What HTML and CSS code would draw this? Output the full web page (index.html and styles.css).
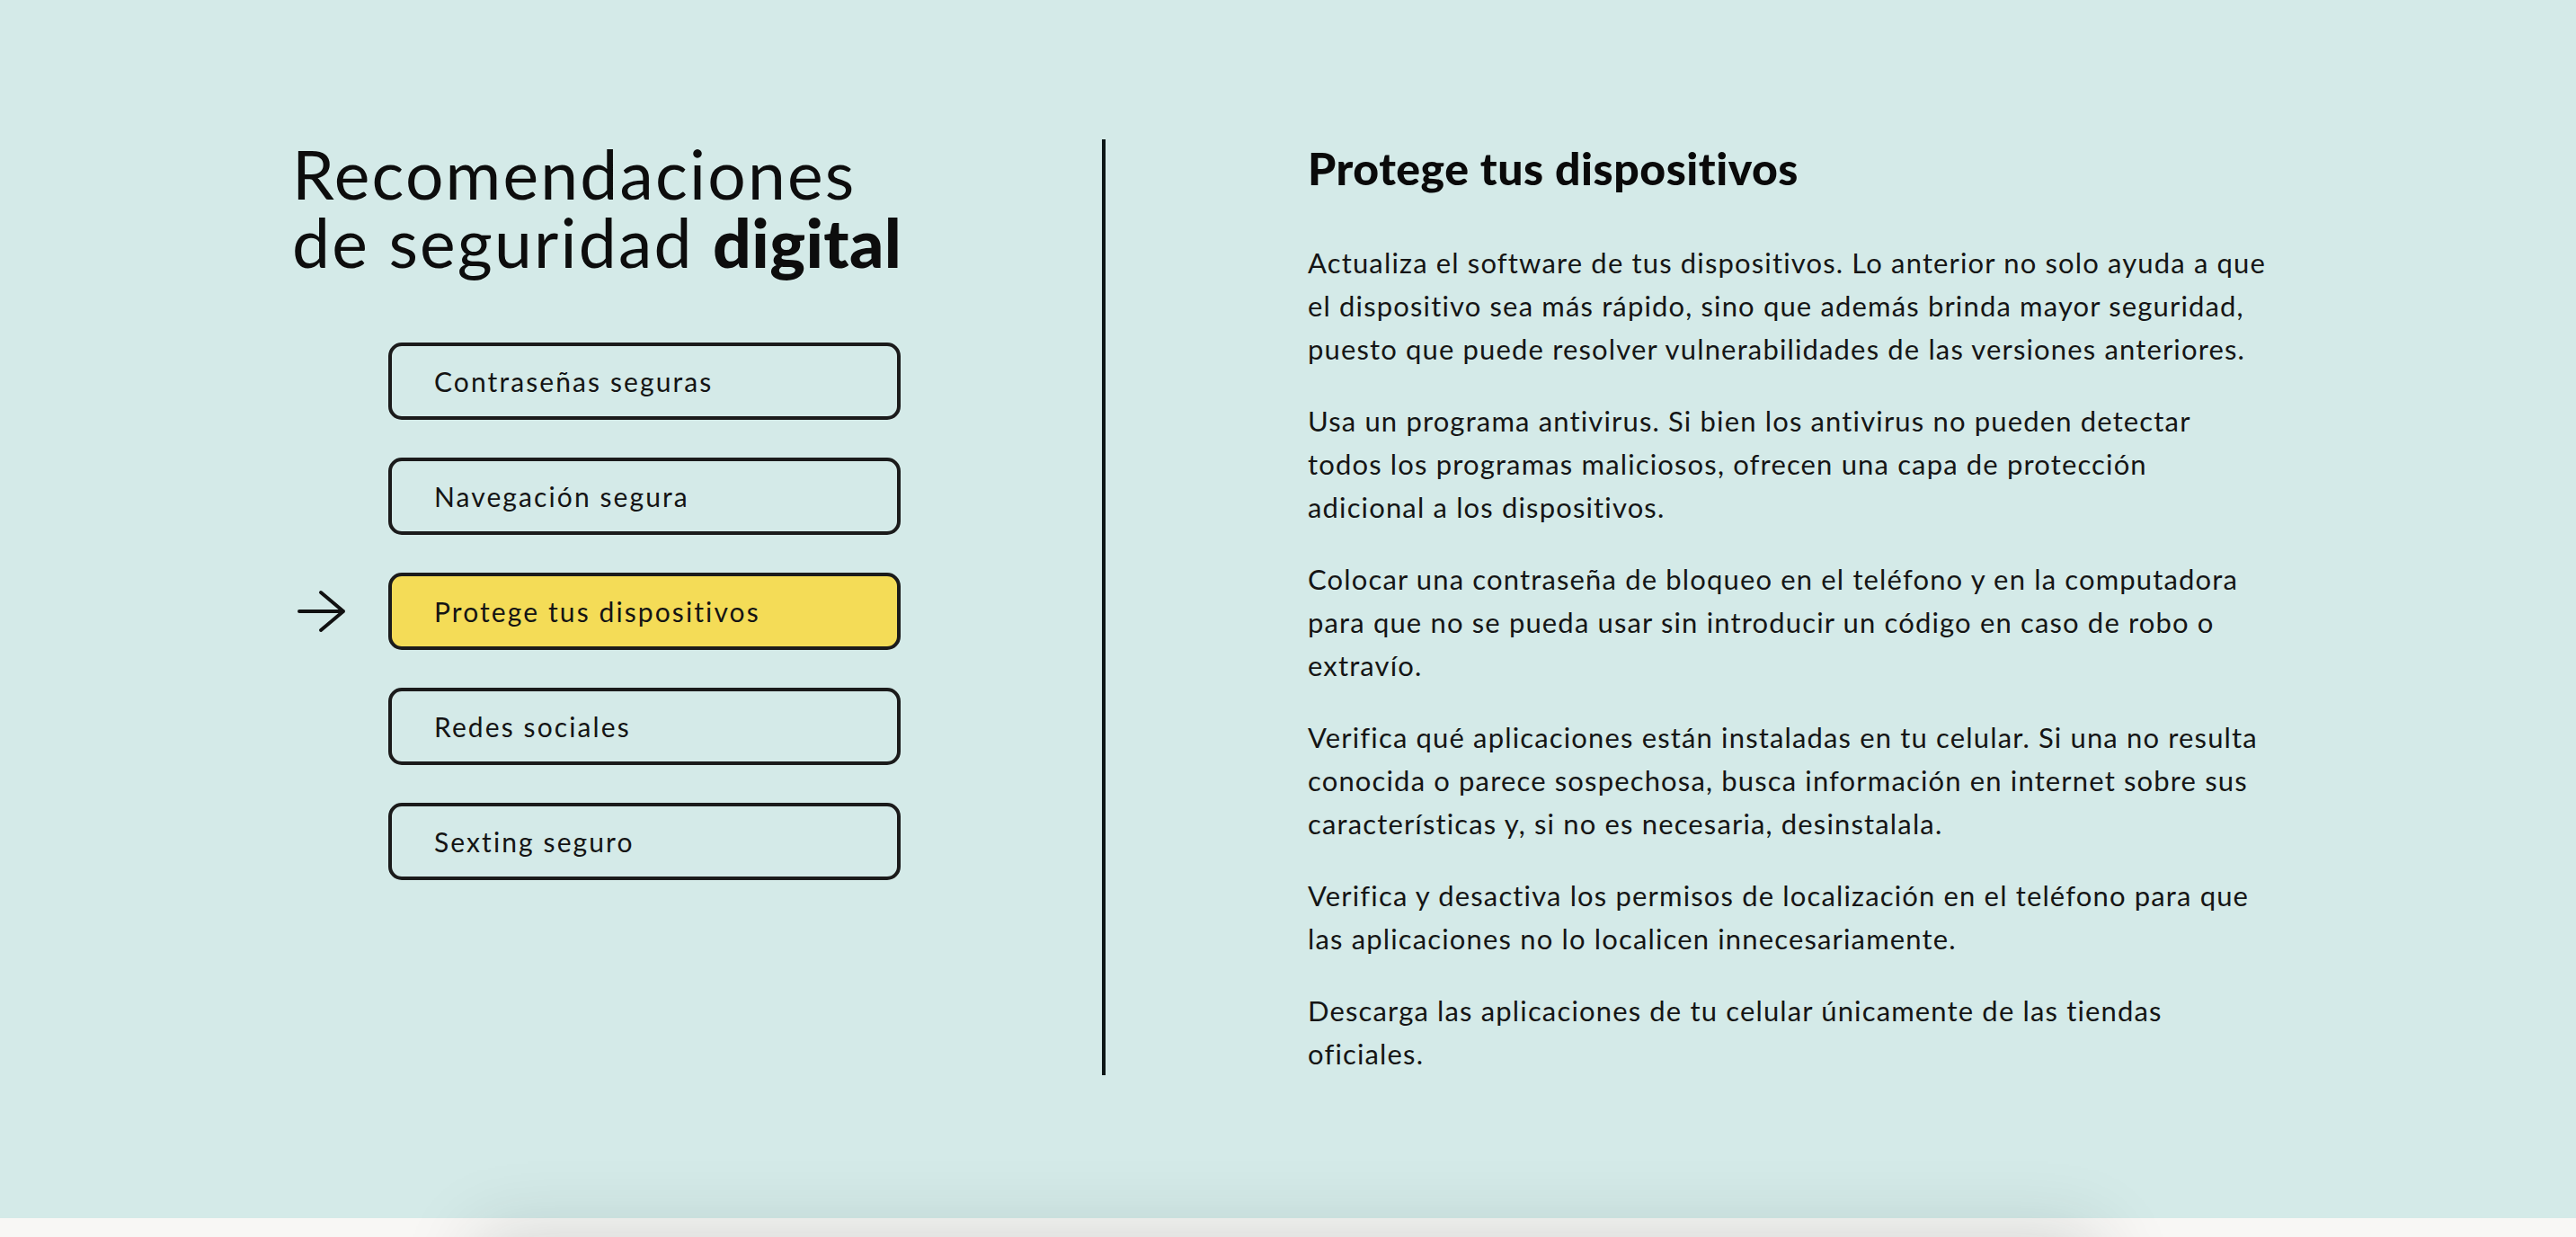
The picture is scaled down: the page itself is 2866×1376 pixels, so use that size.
FILE: index.html
```html
<!DOCTYPE html>
<html lang="es">
<head>
<meta charset="utf-8">
<title>Recomendaciones de seguridad digital</title>
<link rel="stylesheet" href="styles.css">
</head>
<body>
<section class="hero">
  <div class="container">
    <div class="left">
      <h1 class="title"><span class="line">Recomendaciones</span><span class="line">de seguridad <strong>digital</strong></span></h1>
      <ul class="menu">
        <li class="item"><span class="pointer"></span><a class="btn" href="#">Contraseñas seguras</a></li>
        <li class="item"><span class="pointer"></span><a class="btn" href="#">Navegación segura</a></li>
        <li class="item active"><span class="pointer"><svg class="arrow" viewBox="0 0 56 48" width="56" height="48"><path d="M3 24 H52 M27 3 L52 24 L27 45" fill="none" stroke="#111" stroke-width="4" stroke-linecap="round" stroke-linejoin="round"/></svg></span><a class="btn" href="#">Protege tus dispositivos</a></li>
        <li class="item"><span class="pointer"></span><a class="btn" href="#">Redes sociales</a></li>
        <li class="item"><span class="pointer"></span><a class="btn" href="#">Sexting seguro</a></li>
      </ul>
    </div>
    <div class="divider"></div>
    <div class="right">
      <h2 class="heading">Protege tus dispositivos</h2>
      <p>Actualiza el software de tus dispositivos. Lo anterior no solo ayuda a que el dispositivo sea más rápido, sino que además brinda mayor seguridad, puesto que puede resolver vulnerabilidades de las versiones anteriores.</p>
      <p>Usa un programa antivirus. Si bien los antivirus no pueden detectar todos los programas maliciosos, ofrecen una capa de protección adicional a los dispositivos.</p>
      <p>Colocar una contraseña de bloqueo en el teléfono y en la computadora para que no se pueda usar sin introducir un código en caso de robo o extravío.</p>
      <p>Verifica qué aplicaciones están instaladas en tu celular. Si una no resulta conocida o parece sospechosa, busca información en internet sobre sus características y, si no es necesaria, desinstalala.</p>
      <p>Verifica y desactiva los permisos de localización en el teléfono para que las aplicaciones no lo localicen innecesariamente.</p>
      <p>Descarga las aplicaciones de tu celular únicamente de las tiendas oficiales.</p>
    </div>
  </div>
</section>
<section class="next">
  <div class="card"></div>
</section>
</body>
</html>
```
FILE: styles.css
```css
html, body {
  margin: 0;
  padding: 0;
}
body {
  background: #f8f7f5;
  font-family: "Lato", "Liberation Sans", sans-serif;
  color: #151515;
  overflow: hidden;
}
.hero {
  background: #d4eae8;
  height: 1355px;
  box-sizing: border-box;
  padding-top: 155px;
}
.container {
  width: 2216px;
  margin: 0 auto;
  display: flex;
  align-items: stretch;
}
.left {
  width: 677px;
  flex: none;
}
.title {
  margin: 0;
  font-family: "Lato", sans-serif;
  font-weight: 400;
  font-size: 75px;
  line-height: 76px;
  letter-spacing: 2.2px;
  color: #0d0d0d;
  white-space: nowrap;
}
.title .line {
  display: block;
  height: 76px;
}
.title strong {
  font-weight: 900;
  letter-spacing: 0.4px;
}
.menu {
  list-style: none;
  margin: 74px 0 0;
  padding: 0;
  display: flex;
  flex-direction: column;
  gap: 42px;
}
.item {
  display: flex;
  align-items: center;
}
.pointer {
  width: 107px;
  flex: none;
  display: flex;
  align-items: center;
}
.arrow {
  display: block;
  margin-left: 5px;
}
.btn {
  flex: 1;
  height: 86px;
  box-sizing: border-box;
  border: 4px solid #1b1b1b;
  border-radius: 15px;
  padding-left: 47px;
  display: flex;
  align-items: center;
  font-size: 30px;
  letter-spacing: 2.1px;
  color: #141414;
  text-decoration: none;
}
.item.active .btn {
  background: #f4dc57;
}
.divider {
  width: 4px;
  flex: none;
  background: #0d1717;
  margin: 0 225px 0 224px;
}
.right {
  width: 1070px;
  flex: none;
}
.heading {
  margin: 2px 0 51px;
  font-size: 50px;
  line-height: 60px;
  font-weight: 900;
  letter-spacing: 0.5px;
  color: #0a0a0a;
}
.right p {
  margin: 0 0 32px;
  font-size: 31px;
  line-height: 48px;
  letter-spacing: 1.15px;
}
.right p:last-child {
  margin-bottom: 0;
}
.next {
  height: 300px;
  background: #f8f7f5;
  padding-top: 40px;
  box-sizing: border-box;
}
.card {
  width: 1760px;
  height: 260px;
  margin: 0 auto;
  background: #e4e3e1;
  box-shadow: 0 0 80px 22px rgba(10, 40, 40, 0.16);
}
```
